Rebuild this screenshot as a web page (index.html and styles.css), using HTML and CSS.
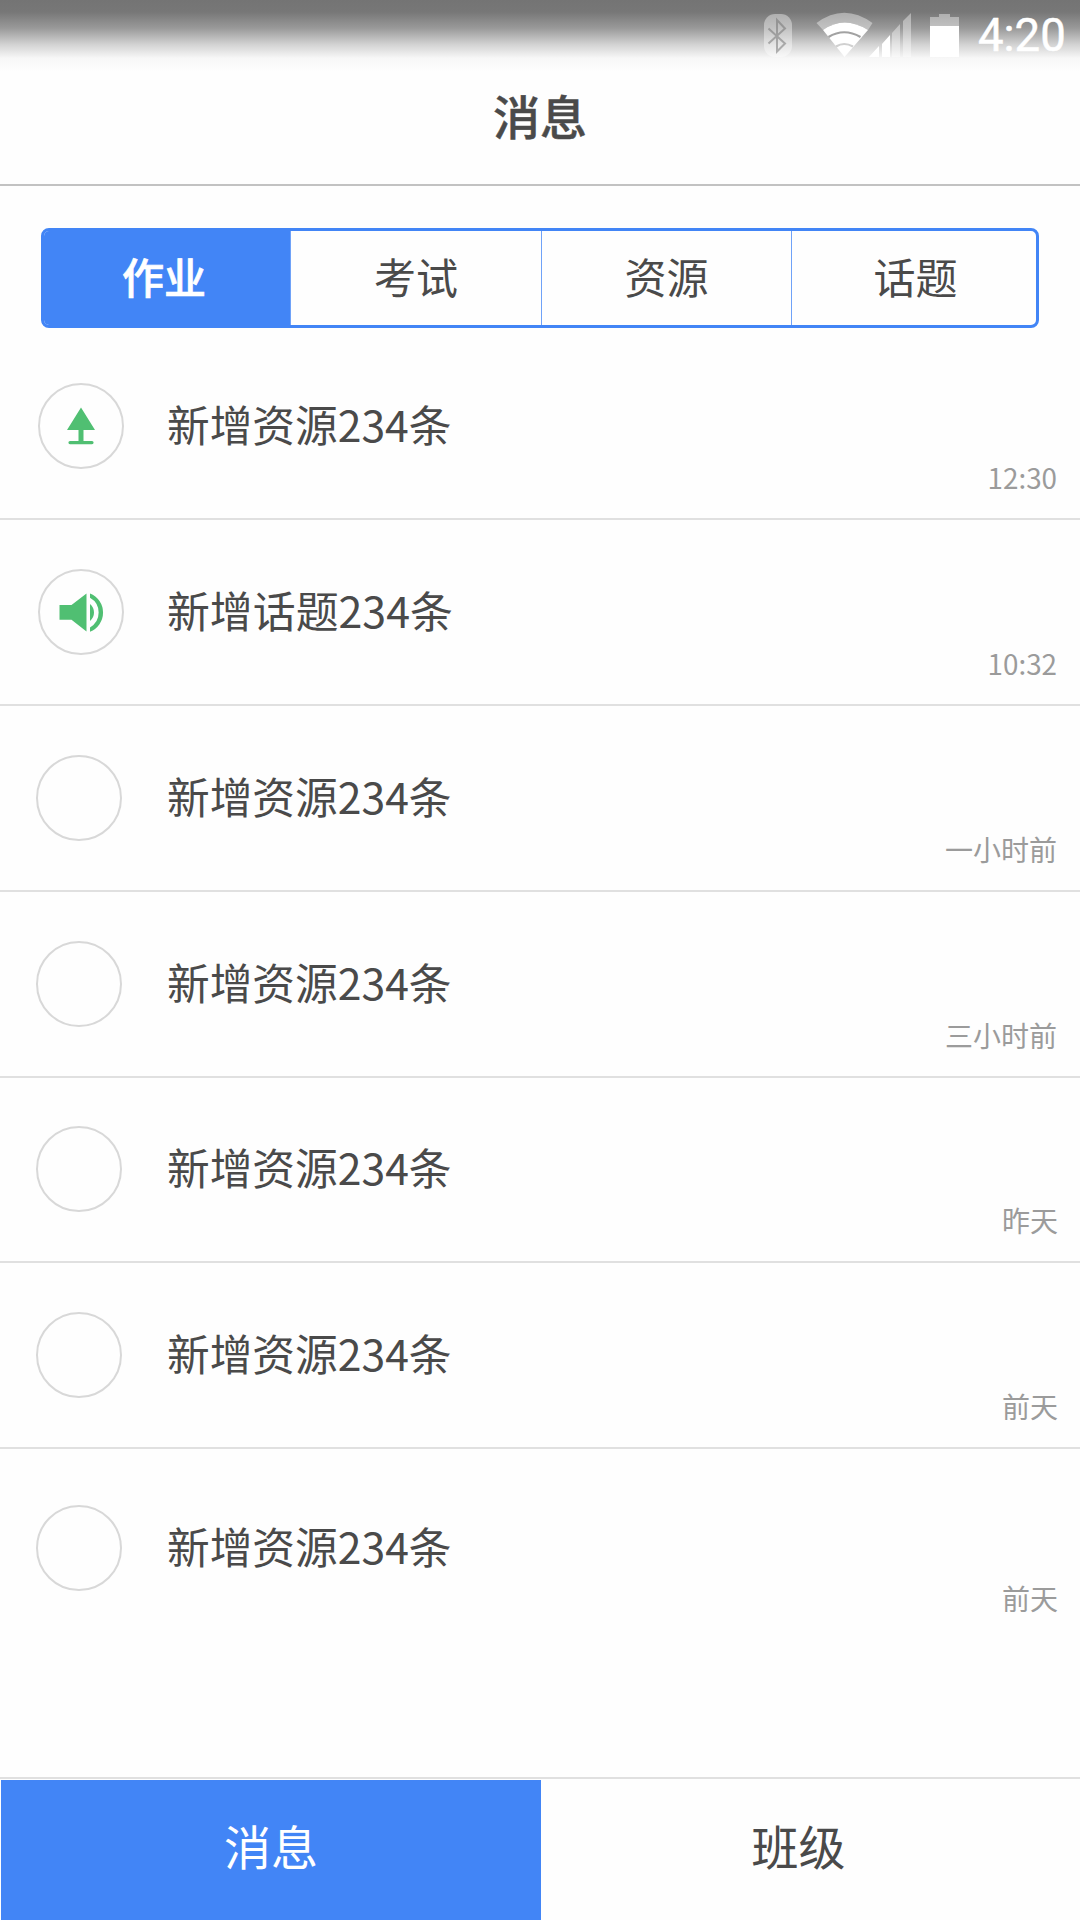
FILE: index.html
```html
<!DOCTYPE html>
<html lang="zh-CN">
<head>
<meta charset="utf-8">
<title>消息</title>
<link rel="stylesheet" href="styles.css">
</head>
<body>
<div class="app">
  <header class="header">
    <div class="status">
      <svg class="status-icons" width="240" height="60" viewBox="0 0 240 60">
        <rect x="24" y="14" width="28" height="43" rx="11" fill="#fff" fill-opacity=".4"/>
        <path fill="none" stroke="#6e6e6e" stroke-opacity=".5" stroke-width="2" d="M28.500 28.500L45 43.500l-8 8V20l8 8.500-16.500 15"/>
        <path fill="#fff" fill-opacity=".4" d="M76.500 23Q104 2.500 132.500 23l-4.500 7Q104 15 83 30z"/>
        <path fill="#fff" d="M83 30Q104 15 128 30l-23.500 27z"/>
        <path fill="none" stroke="#a2a2a2" stroke-width="2.200" d="M88.500 37Q104 27.500 120.500 37"/>
        <path fill="none" stroke="#d0d0d0" stroke-width="2.200" d="M96 46.500Q104 41.500 113 46.500"/>
        <path fill="#fff" d="M129 57l10-11v11zM142 44l8-9v22h-8z"/>
        <path fill="#fff" fill-opacity=".4" d="M152 33l8-9v33h-8zM163 21l8-8v44h-8z"/>
        <path fill="#fff" fill-opacity=".4" d="M190 17h9v-3h11v3h9v9h-29z"/>
        <path fill="#fff" d="M190 26h29v31h-29z"/>
      </svg>
      <span class="clock">4:20</span>
    </div>
    <h1 class="title">消息</h1>
  </header>

  <nav class="tabs">
    <a class="tab tab-active">作业</a>
    <a class="tab">考试</a>
    <a class="tab">资源</a>
    <a class="tab">话题</a>
  </nav>

  <ul class="list">
    <li class="row row-icon">
      <span class="avatar"><svg width="86" height="86" viewBox="0 0 86 86"><path fill="#50bf72" d="M43 24.500L57 47H45.500v11H54a1.500 1.500 0 0 1 0 3.200H32a1.500 1.500 0 0 1 0-3.200h8.500V47H29z"/></svg></span>
      <span class="text">新增资源234条</span>
      <time class="time time-digits">12:30</time>
    </li>
    <li class="row row-icon">
      <span class="avatar"><svg width="86" height="86" viewBox="0 0 86 86"><g fill="#50bf72"><path d="M21.500 36h12L48.500 24.500v38L33.500 50.700h-12zM52 35q4 3.500 4 8.500t-4 8.500z"/><path d="M52 24.500a20.500 20.500 0 0 1 0 38.200v-4.300a17 17 0 0 0 0-29.600z"/></g></svg></span>
      <span class="text text-wide">新增话题234条</span>
      <time class="time time-digits">10:32</time>
    </li>
    <li class="row"><span class="avatar"></span><span class="text">新增资源234条</span><time class="time">一小时前</time></li>
    <li class="row"><span class="avatar"></span><span class="text">新增资源234条</span><time class="time">三小时前</time></li>
    <li class="row row-day"><span class="avatar"></span><span class="text">新增资源234条</span><time class="time">昨天</time></li>
    <li class="row row-day"><span class="avatar"></span><span class="text">新增资源234条</span><time class="time">前天</time></li>
    <li class="row row-day row-last"><span class="avatar"></span><span class="text">新增资源234条</span><time class="time">前天</time></li>
  </ul>

  <nav class="bottom">
    <a class="bottom-item bottom-active">消息</a>
    <a class="bottom-item">班级</a>
  </nav>
</div>
</body>
</html>
```
FILE: styles.css
```css
* { box-sizing: border-box; }
body {
  margin: 0;
  background: #fefefe;
  color: #4a4a4a;
  font-family: "Noto Sans CJK SC", sans-serif;
}
.app {
  display: flex;
  flex-direction: column;
  width: 1080px;
  height: 1920px;
  overflow: hidden;
}
.header {
  flex: none;
  height: 186px;
  border-bottom: 2px solid #c2c2c2;
}
.status {
  display: flex;
  justify-content: flex-end;
  height: 72px;
  padding-right: 15px;
  background: linear-gradient(#747474 0, #777 12px, #999 28px, #d4d4d4 45px, #f7f7f7 58px, #fefefe 72px);
}
.status-icons { flex: none; margin-right: -2px; }
.clock {
  width: 87px;
  color: #fff;
  font: 400 45.500px/72px Roboto, sans-serif;
  -webkit-text-stroke: .5px #fff;
}
.title {
  margin: 0;
  font-size: 47px;
  font-weight: 500;
  -webkit-text-stroke: .5px #4a4a4a;
  line-height: 86px;
  text-align: center;
}
.tabs {
  flex: none;
  display: grid;
  grid-template-columns: 246px 251px 250px 1fr;
  height: 100px;
  margin: 42px 41px 0;
  width: 998px;
  border: 3px solid #4285f6;
  border-radius: 8px;
  overflow: hidden;
}
.tab {
  font-size: 42px;
  line-height: 90px;
  text-align: center;
  border-left: 1px solid #6fa2f8;
}
.tab:last-child { padding-left: 3px; }
.tab-active {
  background: #4285f6;
  border-left: 0;
  padding-right: 6px;
  color: #fff;
  font-weight: 500;
  -webkit-text-stroke: .7px #fff;
}
.list {
  flex: 1;
  margin: 6.400px 0 0;
  padding: 0;
  list-style: none;
}
.row {
  display: flex;
  align-items: center;
  height: 185.800px;
  padding: 0 23px 0 36px;
  border-bottom: 2px solid #e0e0e0;
}
.row-icon { padding-left: 37.600px; }
.row-day { padding-right: 22px; }
.avatar {
  flex: none;
  width: 86px;
  height: 86px;
  border: 2px solid #d8d8d8;
  border-radius: 50%;
}
.avatar svg { display: block; margin: -2px; }
.text {
  flex: 1;
  margin-left: 45px;
  padding-bottom: 6px;
  font-size: 42.700px;
  line-height: 60px;
}
.text-wide { font-size: 42.900px; }
.row-icon .text { margin-left: 43.400px; }
.time {
  align-self: flex-end;
  color: #9b9b9b;
  font-size: 28px;
  line-height: 40px;
  margin-bottom: 21px;
}
.time-digits { font-size: 27.800px; }
.row-last { border: 0; height: 198px; }
.row-last .text { padding-bottom: 6px; }
.row-last .time { margin-bottom: 29px; }
.bottom {
  flex: none;
  display: grid;
  grid-template-columns: 540px 1fr;
  height: 143px;
  padding: 1px 0 0 1px;
  border-top: 2px solid #e0e0e0;
}
.bottom-item {
  padding-right: 24px;
  font-size: 47px;
  line-height: 130px;
  text-align: center;
}
.bottom-active { padding-right: 0; background: #4285f6; color: #fff; }
```
